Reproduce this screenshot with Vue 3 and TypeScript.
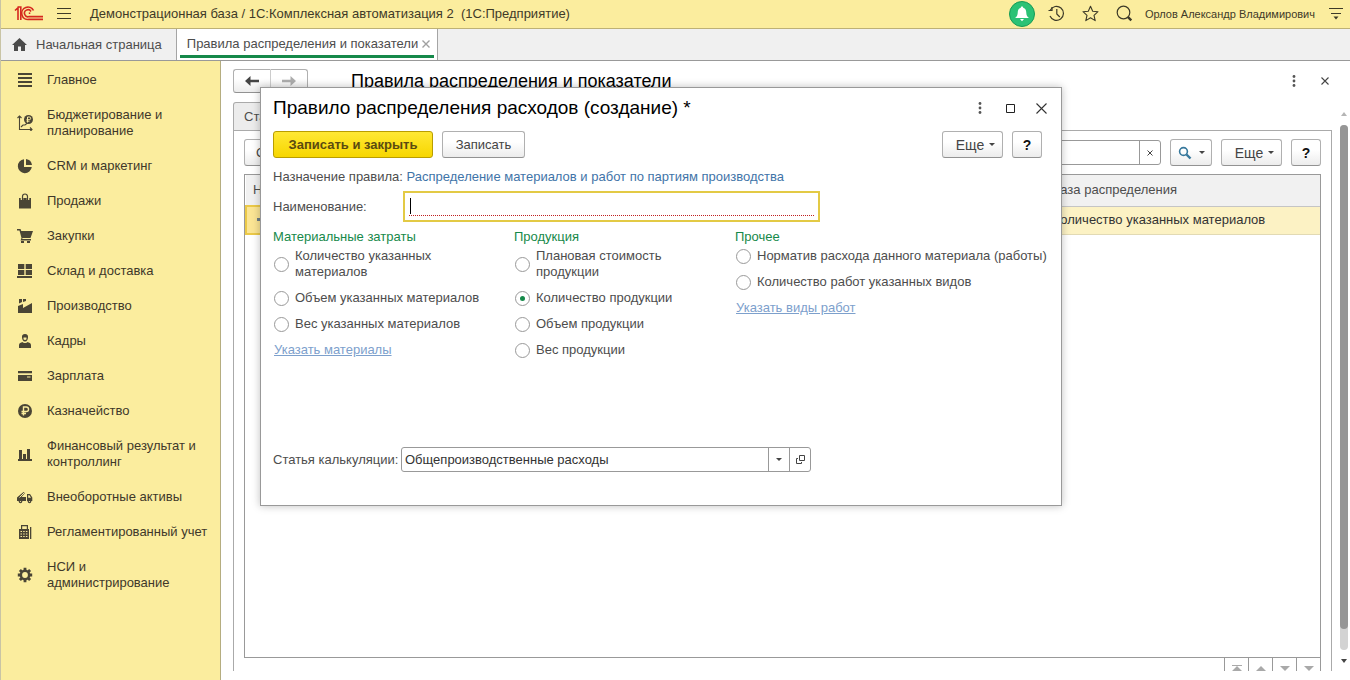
<script setup lang="ts">
import { ref } from 'vue'

interface Section {
  icon: string
  label: string
}
interface RuleGroup {
  title: string
  options: string[]
  link?: string
}

const sections: Section[] = [
  { icon: 'list', label: 'Главное' },
  { icon: 'plan', label: 'Бюджетирование и планирование' },
  { icon: 'pie', label: 'CRM и маркетинг' },
  { icon: 'bag', label: 'Продажи' },
  { icon: 'cart', label: 'Закупки' },
  { icon: 'store', label: 'Склад и доставка' },
  { icon: 'factory', label: 'Производство' },
  { icon: 'person', label: 'Кадры' },
  { icon: 'card', label: 'Зарплата' },
  { icon: 'ruble', label: 'Казначейство' },
  { icon: 'bars', label: 'Финансовый результат и контроллинг' },
  { icon: 'truck', label: 'Внеоборотные активы' },
  { icon: 'register', label: 'Регламентированный учет' },
  { icon: 'gear', label: 'НСИ и администрирование' },
]

const groups: RuleGroup[] = [
  {
    title: 'Материальные затраты',
    options: ['Количество указанных материалов', 'Объем указанных материалов', 'Вес указанных материалов'],
    link: 'Указать материалы',
  },
  {
    title: 'Продукция',
    options: ['Плановая стоимость продукции', 'Количество продукции', 'Объем продукции', 'Вес продукции'],
  },
  {
    title: 'Прочее',
    options: ['Норматив расхода данного материала (работы)', 'Количество работ указанных видов'],
    link: 'Указать виды работ',
  },
]

const rule = ref('Количество продукции')
const ruleName = ref('')
const costItem = ref('Общепроизводственные расходы')
const search = ref('')
</script>

<template>
  <div class="app">
    <header class="topbar">
      <svg class="logo" width="30" height="16" viewBox="0 0 30 16" fill="none" stroke="#d5281e" stroke-width="1.6">
        <path d="M1 4.5 L4 1.8 V14 M3.500 1 H6.800 V14" />
        <path d="M19.500 4.500 A6.200 6.200 0 1 0 15 13.400 H29" />
        <path d="M17 5.500 A3.500 3.500 0 1 0 15 10.600 H29" />
        <path d="M14.800 7.200 h1.500" />
      </svg>
      <button class="plain menu" aria-label="Меню">
        <svg width="14" height="13" viewBox="0 0 14 13" stroke="#3d3a28" stroke-width="1"><path d="M0 1.500H14M0 6.500H14M0 11.500H14" /></svg>
      </button>
      <span class="app-title">Демонстрационная база / 1С:Комплексная автоматизация 2&nbsp; (1С:Предприятие)</span>
      <button class="plain bell" aria-label="Уведомления">
        <svg width="26" height="26" viewBox="0 0 26 26">
          <circle cx="13" cy="13" r="12.500" fill="#2bc275" stroke="#159a55" />
          <path d="M13 5.500c.8 0 1.200.5 1.200 1.200 2.300.7 3 2.500 3.100 5 .1 2.500.8 3.800 2.700 5.300H6c1.900-1.500 2.600-2.800 2.700-5.300.1-2.500.8-4.300 3.100-5 0-.7.4-1.200 1.200-1.200zM11 18h4l-2 2.200z" fill="#fff" />
        </svg>
      </button>
      <button class="plain history" aria-label="История">
        <svg width="17" height="17" viewBox="0 0 17 17" fill="none" stroke="#3d3a28" stroke-width="1.200">
          <path d="M2.200 5.200A7 7 0 1 1 2 11" /><path d="M.5 5.500h3.500V2M8.800 4v5l3 3" />
        </svg>
      </button>
      <button class="plain star" aria-label="Избранное">
        <svg width="17" height="17" viewBox="0 0 17 17" fill="none" stroke="#3d3a28" stroke-width="1.100" stroke-linejoin="round">
          <path d="M8.500 1.200l2.200 5 5.300.5-4 3.600 1.200 5.300-4.700-2.800-4.700 2.800L5 10.300 1 6.700l5.300-.5z" />
        </svg>
      </button>
      <button class="plain find" aria-label="Поиск">
        <svg width="17" height="17" viewBox="0 0 17 17" fill="none" stroke="#3d3a28" stroke-width="1.200">
          <circle cx="7.500" cy="7.500" r="6.300" /><path d="M11.800 11.800l3.500 3.500" stroke-width="2.400" />
        </svg>
      </button>
      <span class="user">Орлов Александр Владимирович</span>
      <button class="plain panel-menu" aria-label="Настройки">
        <svg width="14" height="13" viewBox="0 0 14 13"><path d="M0 1.500H14M2 6.500H12" stroke="#3d3a28" /><path d="M4.500 9.500h5L7 12.500z" fill="#3d3a28" /></svg>
      </button>
    </header>

    <nav class="tabs">
      <a class="tab home" href="#">
        <svg width="15" height="13" viewBox="0 0 15 13" fill="#4b4b4b"><path d="M7.500 0L15 7h-2v6H9V8.500H6V13H2V7H0z" /></svg>
        Начальная страница
      </a>
      <div class="tab active">
        <a href="#">Правила распределения и показатели</a>
        <button class="plain" aria-label="Закрыть вкладку">
          <svg width="8" height="8" viewBox="0 0 8 8" stroke="#a0a0a0" stroke-width="1.400"><path d="M.5.5l7 7M7.500.5l-7 7" /></svg>
        </button>
      </div>
    </nav>

    <div class="body">
      <aside class="sidebar">
        <a v-for="s in sections" :key="s.label" class="section" href="#">
          <svg class="icon" width="16" height="16" viewBox="0 0 16 16" fill="#4a4535">
            <path v-if="s.icon === 'list'" d="M1 1h14v2H1zM1 5h14v2H1zM1 9h14v2H1zM1 13h14v2H1z" />
            <g v-else-if="s.icon === 'plan'">
              <path d="M2.500 1v13.500H15M.5 3l2-2 2 2M13 12.500l2 2-2 2M4 12l2-2h2l3-2.500" fill="none" stroke="#4a4535" stroke-width="1.100" />
              <circle cx="11.500" cy="4.500" r="4.500" />
              <path d="M10.500 7.500V2h1.800a1.300 1.300 0 0 1 0 2.700H9.500M9.500 6.200h3" fill="none" stroke="#fbed9e" />
            </g>
            <path v-else-if="s.icon === 'pie'" d="M7 1.200V9h7.800A7 7 0 1 1 7 1.200zM9 1a7 7 0 0 1 6 6H9z" />
            <g v-else-if="s.icon === 'bag'">
              <path d="M2 5h12v10.500H2z" /><path d="M5 7V4a3 3 0 0 1 6 0v3" fill="none" stroke="#fbed9e" stroke-width="2.600" /><path d="M5.500 7V3.500a2.500 2.500 0 0 1 5 0V7" fill="none" stroke="#4a4535" stroke-width="1.200" />
            </g>
            <path v-else-if="s.icon === 'cart'" d="M0 1h3.500l.8 2H16l-2.500 7H5.500l-.3 1H14v1.500H3.500L4.500 10 2.500 2.500H0zM4 13h3v2H4zM10 13h3v2h-3z" />
            <path v-else-if="s.icon === 'store'" d="M1 1h6.300v5H1zM8.700 1H15v5H8.700zM1 7h6.300v5H1zM8.700 7H15v5H8.700zM0 13h15v2H0z" />
            <path v-else-if="s.icon === 'factory'" d="M1 15V8l5-2v4l9-5v10zM2 1h3v3L2 5.500zM6 1h3v2L6 4z" />
            <path v-else-if="s.icon === 'person'" d="M8 1c2.300 0 3.300 1.500 3 3.500-.2 2-1 4-3 4s-2.800-2-3-4C4.700 2.500 5.700 1 8 1zM2 15v-3c0-2 2-2.500 3.500-3 .8 1.300 4.200 1.300 5 0 1.500.5 3.500 1 3.500 3v3zM6.500 4.500v1.700c.6.900 2.400.9 3 0V4.500z" fill-rule="evenodd" />
            <path v-else-if="s.icon === 'card'" d="M1 3h14v2.200H1zM1 7h14v6H1zM10 8.500v1h3.500v-1z" fill-rule="evenodd" />
            <g v-else-if="s.icon === 'ruble'">
              <circle cx="8" cy="8" r="7" />
              <path d="M6.500 12.500V4h2.800a2.200 2.200 0 0 1 0 4.500H4.500M4.500 10.500H9" fill="none" stroke="#fbed9e" stroke-width="1.400" />
            </g>
            <path v-else-if="s.icon === 'bars'" d="M2 4h3v9h1V8h3v5h1V3h3v10h2v2H1v-2h1z" />
            <g v-else-if="s.icon === 'truck'">
              <path d="M0 11V8.500L6.500 3 8 4 4.500 8H9v4H0z" /><path d="M10 12V5h3l2.300 3.500V12zM11.200 6.200v2.600H14l-1.600-2.600z" fill-rule="evenodd" />
              <path d="M2.500 8.500l5-5" stroke="#fbed9e" /><circle cx="3.500" cy="12.500" r="1.800" /><circle cx="12.500" cy="12.500" r="1.800" /><circle cx="3.500" cy="12.500" r=".6" fill="#fbed9e" /><circle cx="12.500" cy="12.500" r=".6" fill="#fbed9e" />
            </g>
            <g v-else-if="s.icon === 'register'">
              <path d="M4 1h7v4h1v10H2V5h2zM5.200 2.200V5h4.600V2.200zM13 3h1.300v12H13z" fill-rule="evenodd" />
              <path d="M3.500 7.500h7M3.500 10h7M3.500 12.500h7" stroke="#fbed9e" stroke-dasharray="1.500 1.200" />
            </g>
            <g v-else>
              <path d="M8 .8v14.400M.8 8h14.400M2.900 2.900l10.200 10.200M13.100 2.900L2.900 13.100" stroke="#4a4535" stroke-width="2.800" />
              <circle cx="8" cy="8" r="5.400" /><circle cx="8" cy="8" r="2.900" fill="#fbed9e" />
            </g>
          </svg>
          <span>{{ s.label }}</span>
        </a>
      </aside>

      <main class="workspace">
        <div class="page">
          <div class="page-head">
            <div class="nav-buttons">
              <button class="btn" aria-label="Назад">
                <svg width="14" height="10" viewBox="0 0 14 10"><path d="M5.500 0v3.800H14v2.400H5.500V10L0 5z" fill="#444" /></svg>
              </button>
              <button class="btn" aria-label="Вперед">
                <svg width="14" height="10" viewBox="0 0 14 10"><path d="M8.500 0v3.800H0v2.400h8.500V10L14 5z" fill="#adadad" /></svg>
              </button>
            </div>
            <h1>Правила распределения и показатели</h1>
            <button class="plain" aria-label="Действия">
              <svg width="4" height="12" viewBox="0 0 4 12" fill="#555"><circle cx="2" cy="1.500" r="1.400" /><circle cx="2" cy="6" r="1.400" /><circle cx="2" cy="10.500" r="1.400" /></svg>
            </button>
            <button class="plain page-close" aria-label="Закрыть">
              <svg width="8" height="8" viewBox="0 0 8 8" stroke="#444" stroke-width="1.100"><path d="M.5.5l7 7M7.500.5l-7 7" /></svg>
            </button>
          </div>
          <button class="page-tab">Статьи</button>
          <section class="panel">
            <div class="toolbar">
              <button class="btn">Создать</button>
              <div class="combo search">
                <input v-model="search" type="text" aria-label="Поиск в списке" />
                <button aria-label="Очистить">
                  <svg width="6" height="6" viewBox="0 0 6 6" stroke="#444"><path d="M.5.5l5 5M5.500.5l-5 5" /></svg>
                </button>
              </div>
              <button class="btn lens" aria-label="Найти">
                <svg width="14" height="14" viewBox="0 0 14 14" fill="none" stroke="#37789c"><circle cx="5.500" cy="5.500" r="3.900" stroke-width="1.600" /><path d="M8.500 8.500l4 4" stroke-width="2.400" /></svg>
                <i class="caret"></i>
              </button>
              <button class="btn more">Еще <i class="caret"></i></button>
              <button class="btn help">?</button>
            </div>
            <div class="list">
              <table>
                <thead>
                  <tr><th class="col-name">Наименование</th><th>База распределения</th></tr>
                </thead>
                <tbody>
                  <tr>
                    <td class="col-name"><svg width="14" height="6" viewBox="0 0 14 6"><path d="M0 1h14v3H0z" fill="#6f7f86" /></svg></td>
                    <td>Количество указанных материалов</td>
                  </tr>
                </tbody>
              </table>
            </div>
            <div class="pager">
              <button aria-label="В начало"><svg width="10" height="7" viewBox="0 0 10 7" fill="#a9a9a9"><path d="M0 0h10v1H0zM5 1l5 5H0z" /></svg></button>
              <button aria-label="Вверх"><svg width="10" height="7" viewBox="0 0 10 7" fill="#a9a9a9"><path d="M5 1l5 5H0z" /></svg></button>
              <button aria-label="Вниз"><svg width="10" height="7" viewBox="0 0 10 7" fill="#a9a9a9"><path d="M0 1h10L5 6z" /></svg></button>
              <button aria-label="В конец"><svg width="10" height="7" viewBox="0 0 10 7" fill="#a9a9a9"><path d="M0 1h10L5 6z" /></svg></button>
            </div>
          </section>
        </div>

        <div class="scroll">
          <svg width="6" height="4" viewBox="0 0 6 4"><path d="M3 0l3 4H0z" fill="#b5b5b5" /></svg>
          <div class="track"><div class="thumb"></div></div>
          <svg width="6" height="4" viewBox="0 0 6 4"><path d="M3 4l3-4H0z" fill="#444" /></svg>
        </div>

        <form class="dialog" role="dialog" aria-labelledby="dialog-title" @submit.prevent>
          <div class="dialog-head">
            <h2 id="dialog-title">Правило распределения расходов (создание) *</h2>
            <button type="button" class="plain" aria-label="Действия">
              <svg width="4" height="12" viewBox="0 0 4 12" fill="#555"><circle cx="2" cy="1.500" r="1.400" /><circle cx="2" cy="6" r="1.400" /><circle cx="2" cy="10.500" r="1.400" /></svg>
            </button>
            <button type="button" class="plain" aria-label="Развернуть">
              <svg width="9" height="9" viewBox="0 0 9 9" fill="none" stroke="#222"><path d="M.5.5h8v8h-8z" /></svg>
            </button>
            <button type="button" class="plain" aria-label="Закрыть">
              <svg width="11" height="11" viewBox="0 0 11 11" stroke="#333" stroke-width="1.100"><path d="M.5.5l10 10M10.500.5l-10 10" /></svg>
            </button>
          </div>
          <div class="commands">
            <button class="btn primary">Записать и закрыть</button>
            <button type="button" class="btn save">Записать</button>
            <button type="button" class="btn more push">Еще <i class="caret"></i></button>
            <button type="button" class="btn help">?</button>
          </div>
          <p class="purpose">Назначение правила: <a href="#">Распределение материалов и работ по партиям производства</a></p>
          <div class="name-row">
            <label for="rule-name">Наименование:</label>
            <div class="name-field">
              <span v-if="!ruleName" class="text-caret"></span>
              <input id="rule-name" v-model="ruleName" type="text" />
            </div>
          </div>
          <div class="groups">
            <fieldset v-for="g in groups" :key="g.title">
              <legend>{{ g.title }}</legend>
              <label v-for="o in g.options" :key="o" class="option">
                <input v-model="rule" type="radio" name="rule" :value="o" />
                <span>{{ o }}</span>
              </label>
              <a v-if="g.link" class="pick" href="#">{{ g.link }}</a>
            </fieldset>
          </div>
          <div class="cost-row">
            <label for="cost-item">Статья калькуляции:</label>
            <div class="combo cost">
              <input id="cost-item" v-model="costItem" type="text" />
              <button type="button" aria-label="Выбрать"><i class="caret"></i></button>
              <button type="button" aria-label="Открыть">
                <svg width="9" height="9" viewBox="0 0 9 9" fill="none" stroke="#444"><path d="M3.500.5h5v5h-5zM2 3.500H.5v5h5V7" /></svg>
              </button>
            </div>
          </div>
        </form>
      </main>
    </div>
  </div>
</template>

<style>
body {
  margin: 0;
  overflow: hidden;
}
</style>

<style scoped>
.app {
  display: flex;
  flex-direction: column;
  height: 100vh;
  box-sizing: border-box;
  border-left: 1px solid #c9c4a5;
  background: #fff;
  color: #4d4d4d;
  font: 13px/16px "Liberation Sans", Arial, sans-serif;
}
.app * {
  box-sizing: border-box;
}
a {
  color: inherit;
  text-decoration: none;
}
button,
input {
  font: inherit;
  color: inherit;
}
svg {
  display: block;
  flex: none;
}
.plain {
  display: flex;
  padding: 0;
  border: 0;
  background: none;
}
.topbar {
  display: flex;
  align-items: center;
  height: 29px;
  flex: none;
  padding: 0 7px 1px 13px;
  border-bottom: 1px solid #bdb176;
  background: #fbed9e;
  color: #3f3a28;
}
.menu {
  margin: 0 19px 0 13px;
}
.bell {
  margin: 0 13px 0 auto;
}
.history,
.star {
  margin-right: 17px;
}
.find {
  margin-right: 12px;
}
.user {
  font-size: 11px;
}
.panel-menu {
  margin-left: 14px;
}
.tabs {
  display: flex;
  flex: none;
  height: 32px;
  border-bottom: 1px solid #999;
  background: #f0f0f0;
}
.tab {
  display: flex;
  align-items: center;
  gap: 9px;
  padding: 0 14px 0 11px;
  border-right: 1px solid #a5a5a5;
}
.tabs .active {
  gap: 4px;
  height: 29px;
  margin: 0 0 0 3px;
  padding: 4px 4px 0 7px;
  border-right: 0;
  border-bottom: 3px solid #15894a;
  background: #fff;
  box-shadow: 3px 0 #fff, -3px 0 #fff, 4px 0 #a5a5a5, 0 2px #fff, 3px 2px #fff, -3px 2px #fff, 4px 2px #a5a5a5;
}
.body {
  display: flex;
  flex: 1;
  min-height: 0;
}
.sidebar {
  display: flex;
  flex-direction: column;
  gap: 19px;
  flex: none;
  width: 220px;
  padding: 11px 12px 0 16px;
  border-right: 1px solid #b5ad80;
  background: #fbed9e;
  color: #40382a;
}
.section {
  display: flex;
  align-items: center;
  gap: 14px;
}
.section span {
  max-width: 164px;
}
.workspace {
  position: relative;
  display: flex;
  flex: 1;
  min-width: 0;
  padding: 8px 2px 9px 12px;
}
.page {
  display: flex;
  flex: 1;
  flex-direction: column;
  min-width: 0;
}
.page-head {
  display: flex;
  align-items: center;
  height: 24px;
  flex: none;
}
.page-close {
  margin: 0 3px 0 25px;
}
.nav-buttons {
  display: flex;
  width: 74px;
}
.nav-buttons .btn {
  flex: 1;
  height: 24px;
}
.nav-buttons .btn:first-child {
  border-right: 0;
  border-radius: 3px 0 0 3px;
}
.nav-buttons .btn:last-child {
  border-left-color: #ccc;
  border-radius: 0 3px 3px 0;
}
h1,
h2 {
  margin: 0;
  color: #000;
  font-size: 18px;
  font-weight: 400;
  line-height: 24px;
}
h1 {
  flex: 1;
  margin-left: 44px;
}
.btn {
  display: flex;
  align-items: center;
  justify-content: center;
  height: 27px;
  flex: none;
  padding: 0 11px;
  border: 1px solid #b0b0b0;
  border-bottom-color: #929292;
  border-radius: 3px;
  background: linear-gradient(#fff 40%, #ececec);
  color: #444;
}
.caret {
  width: 0;
  border: 3px solid transparent;
  border-top-color: #444;
  border-bottom: 0;
}
.page-tab {
  align-self: flex-start;
  height: 28px;
  flex: none;
  margin-top: 9px;
  padding: 0 10px;
  border: 1px solid #aaa;
  border-bottom: 0;
  border-radius: 3px 0 0;
  background: #ececec;
}
.panel {
  display: flex;
  flex: 1;
  flex-direction: column;
  min-height: 0;
  padding: 8px 10px 0;
  border: 1px solid #aaa;
  border-bottom: 0;
}
.toolbar {
  display: flex;
  align-items: center;
  gap: 9px;
  flex: none;
}
.combo {
  display: flex;
  height: 25px;
  overflow: hidden;
  border: 1px solid #999;
  border-radius: 3px;
  background: #fff;
}
.combo input {
  flex: 1;
  min-width: 0;
  padding: 0 3px;
  border: 0;
  outline: 0;
  background: none;
  color: #333;
}
.combo button {
  display: flex;
  align-items: center;
  justify-content: center;
  width: 21px;
  padding: 0;
  border: 0;
  border-left: 1px solid #999;
  background: none;
}
.search {
  width: 260px;
  margin-left: auto;
}
.lens {
  gap: 7px;
  width: 42px;
  padding: 0;
}
.more {
  gap: 5px;
  width: 61px;
  padding: 0 0 0 6px;
  font-size: 14px;
}
.help {
  width: 30px;
  padding: 0;
  color: #111;
  font-size: 14px;
  font-weight: 700;
}
.list {
  flex: 1;
  min-height: 0;
  margin-top: 8px;
  border: 1px solid #999;
}
table {
  width: 100%;
  border-collapse: collapse;
  table-layout: fixed;
}
th {
  height: 31px;
  padding: 0 7px;
  border-bottom: 1px solid #c5c5c5;
  background: #f1f1f1;
  font-weight: 400;
  text-align: left;
}
td {
  height: 28px;
  padding: 0 7px;
  border-bottom: 1px solid #e2dab4;
  background: #fcf2c4;
  color: #333;
}
th:last-child,
td:last-child {
  padding-left: 11px;
}
.col-name {
  width: 74%;
}
td.col-name {
  padding: 0 10px;
  border: 2px solid #ebc948;
  background: #fbe594;
}
.pager {
  display: flex;
  align-self: flex-end;
  flex: none;
  height: 13px;
  border-right: 1px solid #999;
}
.pager button {
  display: flex;
  justify-content: center;
  width: 24px;
  padding: 7px 0 0;
  border: 0;
  border-left: 1px solid #999;
  background: none;
}
.scroll {
  display: flex;
  flex-direction: column;
  align-items: center;
  width: 8px;
  gap: 9px;
  margin: 43px 0 8px 8px;
}
.track {
  flex: 1;
  width: 8px;
  border-radius: 4px;
  background: #d3d3d3;
}
.thumb {
  height: 96%;
  border-radius: 4px;
  background: #969696;
}
.dialog {
  position: absolute;
  top: 26px;
  right: 288px;
  left: 39px;
  padding: 8px 14px 33px 12px;
  border: 1px solid #999;
  background: #fff;
  box-shadow: 0 0 8px rgba(0, 0, 0, 0.25);
}
.dialog-head {
  display: flex;
  align-items: center;
  gap: 20px;
}
.dialog-head .plain {
  width: 11px;
  justify-content: center;
}
h2 {
  flex: 1;
  font-size: 19px;
}
.commands {
  display: flex;
  gap: 9px;
  margin: 11px 5px 0 0;
}
.primary {
  width: 160px;
  padding: 0;
  border-color: #b99d00;
  background: linear-gradient(#ffe834, #f7d600);
  color: #5a4a10;
  font-weight: 700;
}
.save {
  width: 83px;
}
.push {
  margin-left: auto;
}
.purpose {
  margin: 11px 0 0;
}
.purpose a {
  color: #3f74a8;
}
.name-row {
  display: flex;
  align-items: center;
  margin-top: 6px;
}
.name-row label {
  width: 130px;
}
.name-field {
  position: relative;
  width: 417px;
  height: 31px;
  padding: 4px;
  border: 2px solid #e3ca45;
}
.name-field input {
  display: block;
  width: 100%;
  height: 19px;
  padding: 0 2px;
  border: 0;
  border-bottom: 1px dotted #c02020;
  outline: 0;
  background: none;
}
.text-caret {
  position: absolute;
  top: 5px;
  left: 5px;
  width: 1px;
  height: 16px;
  background: #000;
}
.groups {
  display: grid;
  grid-template-columns: 221px 201px 1fr;
  gap: 20px;
  min-height: 218px;
  margin-top: 7px;
}
fieldset {
  display: flex;
  flex-direction: column;
  align-items: flex-start;
  gap: 10px;
  min-width: 0;
  margin: 0;
  padding: 0;
  border: 0;
}
fieldset:last-child {
  white-space: nowrap;
}
legend {
  padding: 0 0 3px;
  color: #16894a;
}
.option {
  display: flex;
  align-items: center;
  gap: 6px;
}
.option input {
  display: grid;
  place-items: center;
  width: 15px;
  height: 15px;
  flex: none;
  margin: 0 0 0 1px;
  appearance: none;
  border: 1px solid #999;
  border-radius: 50%;
}
.option input:checked::before {
  width: 5px;
  height: 5px;
  border-radius: 50%;
  background: #16894a;
  content: "";
}
.pick {
  margin-left: 1px;
  color: #7da0cc;
  text-decoration: underline;
}
.cost-row {
  display: flex;
  align-items: center;
}
.cost-row label {
  width: 128px;
}
.cost {
  width: 410px;
}
</style>
